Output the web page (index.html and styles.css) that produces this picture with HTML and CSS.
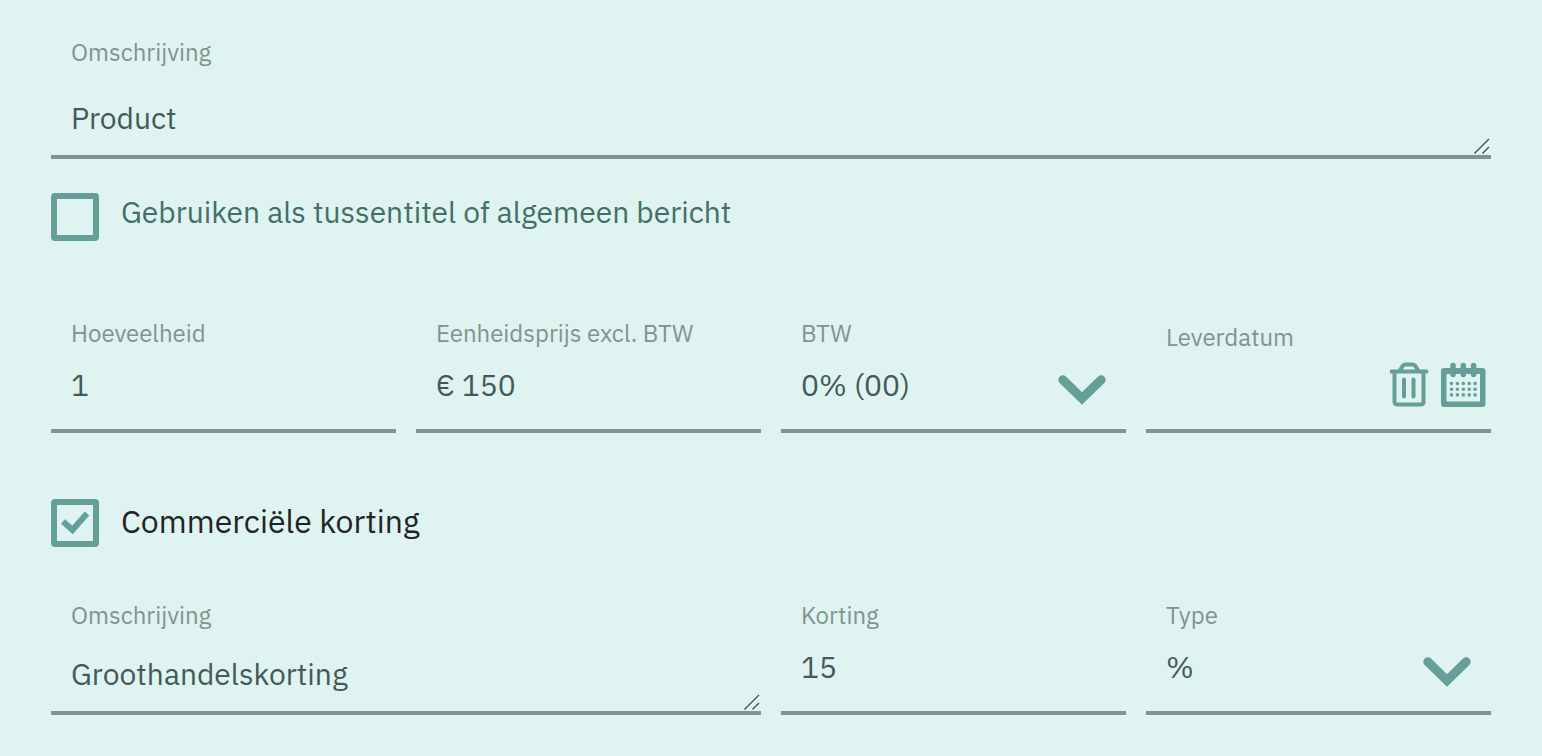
FILE: index.html
```html
<!DOCTYPE html>
<html lang="nl">
<head>
<meta charset="utf-8">
<meta name="viewport" content="width=device-width, initial-scale=1">
<title>Product</title>
<link rel="stylesheet" href="styles.css">
</head>
<body>
<form class="line-form">
  <div class="field field-main">
    <label class="field-label" for="description">Omschrijving</label>
    <textarea class="field-text" id="description" rows="1">Product</textarea>
    <svg class="grip" viewBox="0 0 16 16" aria-hidden="true"><path class="grip-light" d="M1.500 16.500 15.500 2.500M9.500 16.500l6-6"/><path class="grip-dark" d="M.5 15.500 15 1M8.500 15.500 15 9"/></svg>
  </div>

  <div class="check">
    <span class="check-mark"><input class="check-box" type="checkbox" id="subtitle"><svg class="tick" viewBox="0 0 48 48" aria-hidden="true"><path d="m12 22.500 9.500 8.500 14.500-16.500"/></svg></span>
    <label class="check-label" for="subtitle">Gebruiken als tussentitel of algemeen bericht</label>
  </div>

  <div class="grid grid-amounts">
    <div class="field">
      <label class="field-label" for="quantity">Hoeveelheid</label>
      <input class="field-input" id="quantity" type="text" value="1">
    </div>
    <div class="field">
      <label class="field-label" for="price">Eenheidsprijs excl. BTW</label>
      <input class="field-input" id="price" type="text" value="€ 150">
    </div>
    <div class="field">
      <label class="field-label" for="vat">BTW</label>
      <select class="field-input" id="vat"><option>0% (00)</option></select>
      <svg class="chevron" viewBox="0 0 48 30" aria-hidden="true"><path d="M4.800 4.800 24 23.500 43.200 4.800"/></svg>
    </div>
    <div class="field">
      <label class="field-label field-label-date" for="delivery">Leverdatum</label>
      <input class="field-input" id="delivery" type="text">
      <div class="date-tools">
        <button class="tool" type="button" aria-label="Datum wissen">
          <svg class="icon-trash" viewBox="0 0 40 46" aria-hidden="true"><path d="M1.500 9.500h35M9.500 9l3.500-5.500q1-1 2.500-1h7q1.500 0 2.500 1L28.500 9M4.500 10v29.500q0 3 3 3h23q3 0 3-3V10M14 17.500v17M23.500 17.500v17"/></svg>
        </button>
        <button class="tool" type="button" aria-label="Datum kiezen">
          <svg class="icon-calendar" viewBox="0 0 46 46" aria-hidden="true">
            <path class="solid" fill-rule="evenodd" d="M3 6h38.500q3 0 3 3v33q0 3-3 3H3q-3 0-3-3V9q0-3 3-3ZM5.500 12v27.500H39V12Z"/>
            <path class="pegs" d="M12 3.500v9M22.300 3.500v9M32.600 3.500v9"/>
            <path class="dots" d="M10.500 21.500h0M16.400 21.500h0M22.300 21.500h0M28.200 21.500h0M34.100 21.500h0M10.500 27.200h0M16.400 27.200h0M22.300 27.200h0M28.200 27.200h0M34.100 27.200h0M10.500 32.900h0M16.400 32.900h0M22.300 32.900h0M28.200 32.900h0M34.100 32.900h0"/>
          </svg>
        </button>
      </div>
    </div>
  </div>

  <div class="check check-discount">
    <span class="check-mark"><input class="check-box" type="checkbox" id="discount" checked><svg class="tick" viewBox="0 0 48 48" aria-hidden="true"><path d="m12 22.500 9.500 8.500 14.500-16.500"/></svg></span>
    <label class="check-label" for="discount">Commerciële korting</label>
  </div>

  <div class="grid grid-discount">
    <div class="field field-wide">
      <label class="field-label" for="discount-description">Omschrijving</label>
      <textarea class="field-text" id="discount-description" rows="1">Groothandelskorting</textarea>
      <svg class="grip" viewBox="0 0 16 16" aria-hidden="true"><path class="grip-light" d="M1.500 16.500 15.500 2.500M9.500 16.500l6-6"/><path class="grip-dark" d="M.5 15.500 15 1M8.500 15.500 15 9"/></svg>
    </div>
    <div class="field">
      <label class="field-label" for="discount-value">Korting</label>
      <input class="field-input" id="discount-value" type="text" value="15">
    </div>
    <div class="field">
      <label class="field-label" for="discount-type">Type</label>
      <select class="field-input" id="discount-type"><option>%</option></select>
      <svg class="chevron" viewBox="0 0 48 30" aria-hidden="true"><path d="M4.800 4.800 24 23.500 43.200 4.800"/></svg>
    </div>
  </div>
</form>
</body>
</html>
```
FILE: styles.css
```css
:root {
  --accent: #659f98;
  --line: #829491;
  --label: #829491;
  --value: #425b5a;
}

* {
  box-sizing: border-box;
}

body {
  margin: 0;
  background: #dff3f0;
  color: var(--value);
  font-family: "IBM Plex Sans", Roboto, sans-serif;
}

.line-form {
  padding: 37px 51px 40px;
}

.field {
  position: relative;
  display: flex;
  flex-direction: column;
  border-bottom: 4px solid var(--line);
}

.field-label {
  padding: 0 20px 2px;
  color: var(--label);
  font-size: 24px;
  line-height: 30px;
}

.field-label-date {
  padding-top: 4px;
  margin-bottom: -4px;
}

.field-input,
.field-text {
  width: 100%;
  margin: 0;
  border: 0;
  border-radius: 0;
  outline: 0;
  background: transparent;
  color: inherit;
  font: inherit;
  font-size: 30px;
  appearance: none;
}

.field-input {
  height: 68px;
  margin-bottom: 11px;
  padding: 0 20px;
}

.field-text {
  display: block;
  flex: 1;
  min-height: 79px;
  padding: 23px 20px 16px;
  line-height: 38px;
  resize: none;
  overflow: hidden;
}

.field-main .field-text {
  min-height: 86px;
  padding-top: 30px;
}

.grip {
  position: absolute;
  right: 1px;
  bottom: 1px;
  width: 16px;
  height: 16px;
  fill: none;
  pointer-events: none;
}

.grip-dark {
  stroke: #4f5957;
  stroke-width: 1.5;
}

.grip-light {
  stroke: #ffffff;
  stroke-width: 1.5;
}

.chevron {
  position: absolute;
  right: 20px;
  bottom: 24px;
  width: 48px;
  height: 30px;
  fill: none;
  stroke: var(--accent);
  stroke-width: 9;
  stroke-linecap: round;
  pointer-events: none;
}

.check {
  display: flex;
  gap: 22px;
  margin-top: 34px;
}

.check-mark {
  position: relative;
  flex: none;
  width: 48px;
  height: 48px;
}

.check-box {
  display: block;
  width: 48px;
  height: 48px;
  margin: 0;
  border: 6px solid var(--accent);
  border-radius: 4px;
  appearance: none;
}

.tick {
  position: absolute;
  inset: 0;
  display: none;
  fill: none;
  stroke: var(--accent);
  stroke-width: 6;
  pointer-events: none;
}

.check-box:checked + .tick {
  display: block;
}

.check-label {
  color: #426f67;
  font-size: 30px;
  line-height: 38px;
}

.check-discount {
  margin-top: 66px;
}

.check-discount .check-label {
  color: #212529;
  font-size: 32px;
  line-height: 44px;
}

.grid {
  display: grid;
  grid-template-columns: repeat(4, minmax(0, 1fr));
  gap: 20px;
}

.grid-amounts {
  margin-top: 77px;
}

.grid-discount {
  margin-top: 53px;
}

.field-wide {
  grid-column: span 2;
}

.date-tools {
  position: absolute;
  right: 4px;
  bottom: 21px;
  display: flex;
  gap: 11px;
}

.tool {
  display: block;
  padding: 0;
  border: 0;
  background: none;
  color: var(--accent);
}

.icon-trash,
.icon-calendar {
  display: block;
  width: 40px;
  height: 46px;
}

.icon-calendar {
  width: 46px;
}

.icon-trash {
  fill: none;
  stroke: currentColor;
  stroke-width: 4;
  stroke-linecap: round;
}

.solid {
  fill: currentColor;
}

.pegs,
.dots {
  fill: none;
  stroke: currentColor;
  stroke-width: 5.500;
  stroke-linecap: round;
}

.dots {
  stroke-width: 3.600;
}
```
